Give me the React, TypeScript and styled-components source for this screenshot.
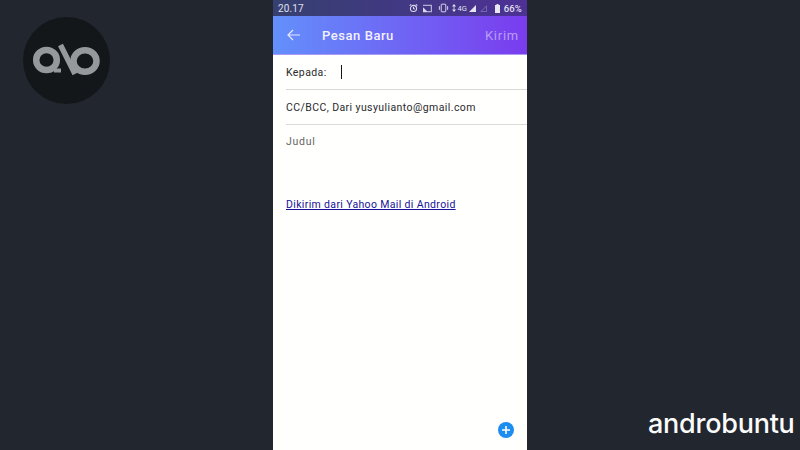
import styled, { createGlobalStyle } from "styled-components";

const GlobalStyle = createGlobalStyle`
  html, body {
    margin: 0;
    padding: 0;
    width: 800px;
    height: 450px;
    overflow: hidden;
    background: #22262f;
    font-family: Roboto, "Liberation Sans", sans-serif;
  }
`;

const Page = styled.div`
  position: relative;
  width: 800px;
  height: 450px;
  display: flex;
  justify-content: center;
  background: #22262f;
`;
const Phone = styled.div`
  width: 254px;
  height: 450px;
  display: flex;
  flex-direction: column;
  background: #fffffd;
`;
const StatusBar = styled.div`
  height: 16px;
  flex: none;
  display: flex;
  align-items: center;
  justify-content: space-between;
  padding: 0 5px 0 5px;
  background: linear-gradient(90deg, #36406f, #4d3196);
  color: #e0e0ee;
  font-size: 10px;
  letter-spacing: 0.15px;
`;
const StatusIcons = styled.div`
  display: flex;
  align-items: center;
`;
const StatusSlot = styled.span<{ $gap: number }>`
  display: block;
  margin-left: ${(p) => p.$gap}px;
  svg {
    display: block;
  }
`;
const Network = styled(StatusSlot)`
  font-size: 7.5px;
  letter-spacing: 0;
`;
const Percent = styled(StatusSlot)`
  font-size: 9.5px;
  font-weight: 500;
`;
const AppBar = styled.div`
  height: 39px;
  flex: none;
  display: flex;
  align-items: center;
  padding: 0 8px 0 14px;
  background: linear-gradient(90deg, #6390fb, #7a3cee);
  border-bottom: 1px solid #a99bf5;
  box-sizing: border-box;
  svg {
    display: block;
  }
`;
const Title = styled.div`
  flex: 1;
  margin-left: 22px;
  color: #f4f1ff;
  font-size: 13px;
  font-weight: 500;
  letter-spacing: 0.55px;
`;
const Send = styled.div`
  color: #b99df6;
  font-size: 13px;
  letter-spacing: 0.75px;
`;
const Row = styled.div<{ $h: number; $line?: boolean }>`
  height: ${(p) => p.$h}px;
  flex: none;
  display: flex;
  align-items: center;
  margin-left: 13px;
  box-sizing: border-box;
  font-size: 10.5px;
  letter-spacing: 0.41px;
  color: #2a2a2e;
  border-bottom: ${(p) => (p.$line ? "1px solid #d9d9d8" : "none")};
`;
const Label = styled.span`
  width: 55px;
`;
const Caret = styled.span`
  width: 1px;
  height: 14px;
  background: #15151a;
`;
const Subject = styled(Row)`
  color: #666;
  letter-spacing: 0.75px;
  padding-bottom: 2px;
`;
const Signature = styled.a`
  margin: 39px 0 0 13px;
  color: #16119a;
  font-size: 10.5px;
  letter-spacing: 0.35px;
  text-decoration: underline;
`;
const AddButton = styled.div`
  position: absolute;
  left: 498px;
  top: 422px;
  width: 16px;
  height: 16px;
  border-radius: 50%;
  background: #1d8df0;
  display: flex;
  align-items: center;
  justify-content: center;
`;
const LogoBadge = styled.div`
  position: absolute;
  left: 23px;
  top: 17px;
  width: 87px;
  height: 87px;
  border-radius: 50%;
  background: #14171a;
`;
const Brand = styled.div`
  position: absolute;
  left: 648px;
  top: 406px;
  color: #fbfbfb;
  font-family: Inter, Lato, sans-serif;
  font-size: 27px;
  font-weight: 500;
  letter-spacing: -0.25px;
  line-height: 36px;
`;

function App() {
  return (
    <>
      <GlobalStyle />
      <Page>
        <LogoBadge>
          <svg width="87" height="87" viewBox="0 0 87 87" fill="none" stroke="#96999b">
            <ellipse cx="23.5" cy="43" rx="10.3" ry="10" strokeWidth="6.5" />
            <ellipse cx="62" cy="44" rx="11.5" ry="10.8" strokeWidth="6.5" />
            <path d="M37.5 28L52 57" strokeWidth="5.5" />
            <path d="M31 53.5L38 53.5" strokeWidth="4" />
          </svg>
        </LogoBadge>
        <Phone>
          <StatusBar>
            <span>20.17</span>
            <StatusIcons>
              <StatusSlot $gap={0}>
                <svg width="9" height="10" viewBox="0 0 10 10" fill="none" stroke="#d8d8ea" strokeWidth="1.2">
                  <circle cx="5" cy="5.5" r="3.4" />
                  <path d="M5 3.5V5.6L6.4 6.4M0.8 2.4L2.4 1M9.2 2.4L7.6 1" />
                </svg>
              </StatusSlot>
              <StatusSlot $gap={5}>
                <svg width="9" height="9" viewBox="0 0 11 9" fill="#d8d8ea">
                  <path d="M0 0H11V9H5V7.5H9.5V1.5H0Z" opacity="0.75" />
                  <path d="M0 3L5 8V9H0Z" />
                </svg>
              </StatusSlot>
              <StatusSlot $gap={6}>
                <svg width="11" height="10" viewBox="0 0 12 10" fill="none" stroke="#e4e4f0" strokeWidth="1">
                  <rect x="3.5" y="0.8" width="5" height="8.4" rx="0.8" />
                  <path d="M1.5 3V7M10.5 3V7" />
                </svg>
              </StatusSlot>
              <StatusSlot $gap={3}>
                <svg width="4" height="10" viewBox="0 0 5 10" fill="#e4e4f0">
                  <path d="M2.5 0L5 3H0ZM2.5 10L0 7H5Z" />
                  <path d="M2 3H3V7H2Z" />
                </svg>
              </StatusSlot>
              <Network $gap={1}>4G</Network>
              <StatusSlot $gap={2}>
                <svg width="7" height="7" viewBox="0 0 8 8" fill="#e4e4f0">
                  <path d="M8 0V8H0Z" />
                </svg>
              </StatusSlot>
              <StatusSlot $gap={4}>
                <svg width="7" height="7" viewBox="0 0 8 8" fill="none" stroke="#8e80c4" strokeWidth="0.8">
                  <path d="M7.5 1V7.5H1Z" />
                </svg>
              </StatusSlot>
              <StatusSlot $gap={8}>
                <svg width="5" height="9" viewBox="0 0 5 9" fill="#e8e8f2">
                  <path d="M1.5 0H3.5V1H5V9H0V1H1.5Z" />
                </svg>
              </StatusSlot>
              <Percent $gap={4}>66%</Percent>
            </StatusIcons>
          </StatusBar>
          <AppBar>
            <svg width="13" height="12" viewBox="0 0 13 12" fill="none" stroke="#e9e6ff" strokeWidth="1.2">
              <path d="M13 6H1M6 1L1 6L6 11" />
            </svg>
            <Title>Pesan Baru</Title>
            <Send>Kirim</Send>
          </AppBar>
          <Row $h={35} $line>
            <Label>Kepada:</Label>
            <Caret />
          </Row>
          <Row $h={35} $line>CC/BCC, Dari yusyulianto@gmail.com</Row>
          <Subject $h={34}>Judul</Subject>
          <Signature href="#">Dikirim dari Yahoo Mail di Android</Signature>
        </Phone>
        <AddButton>
          <svg width="8" height="8" viewBox="0 0 8 8" stroke="#fff" strokeWidth="1.6">
            <path d="M4 0V8M0 4H8" />
          </svg>
        </AddButton>
        <Brand>androbuntu</Brand>
      </Page>
    </>
  );
}

export default App;
